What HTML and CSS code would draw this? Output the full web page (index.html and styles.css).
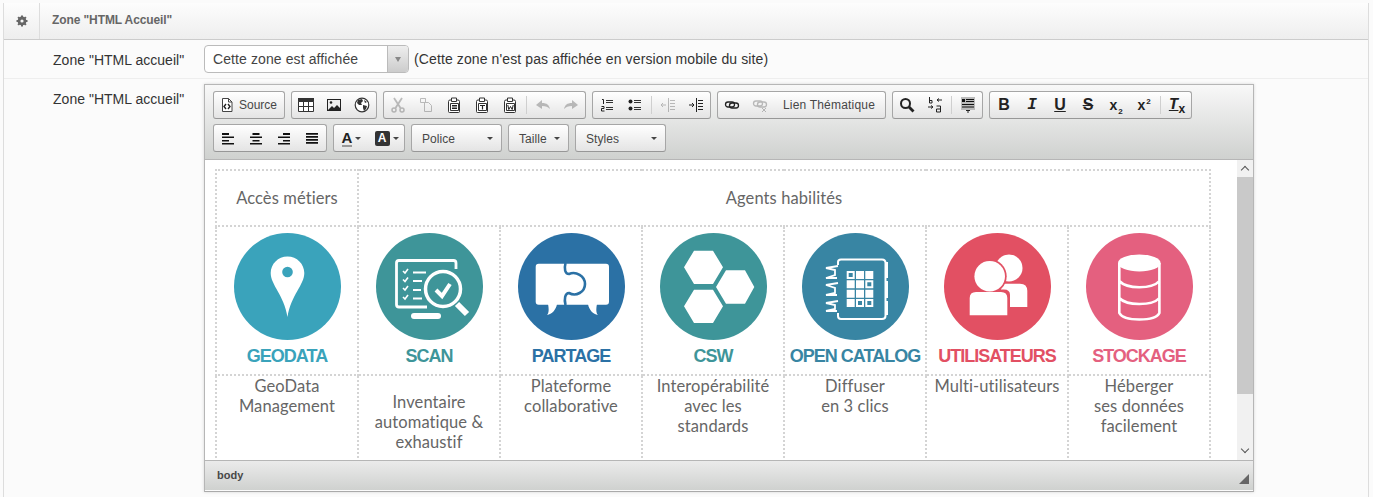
FILE: index.html
```html
<!DOCTYPE html>
<html lang="fr">
<head>
  <meta charset="UTF-8" />
  <title>Zone HTML Accueil</title>
  <link rel="stylesheet" href="styles.css">
</head>
<body>
<div class="panel">
  <div class="panel-head">
    <div class="gear-cell">
      <svg class="gear" viewBox="0 0 12 12"><circle cx="6" cy="6" r="3" fill="none" stroke="#666" stroke-width="2.800"/><path d="M6 .5V3M6 9v2.500M.5 6H3M9 6h2.500M2.100 2.100l1.700 1.700M8.200 8.200l1.700 1.700M2.100 9.900l1.700-1.700M8.200 3.800l1.700-1.700" stroke="#666" stroke-width="2"/></svg>
    </div>
    <div class="panel-title">Zone "HTML Accueil"</div>
  </div>

  <div class="form-row first">
    <label class="form-label">Zone "HTML accueil"</label>
    <div class="select-box">
      <span class="select-value">Cette zone est affichée</span>
      <span class="select-arrow"></span>
    </div>
    <span class="select-note">(Cette zone n'est pas affichée en version mobile du site)</span>
  </div>

  <div class="form-row second">
    <label class="form-label">Zone "HTML accueil"</label>
    <div class="editor">
      <div class="editor-top">
        <div class="tool-row">
          <div class="tool-group">
            <span class="btn btn-text source">
              <svg class="ico" viewBox="0 0 16 16"><path d="M3.500 1.500h6l3.500 3.500v9.500h-9.500z" fill="#fff" stroke="#444"/><path d="M9.500 1.500v3.500h3.500" fill="none" stroke="#444"/><path d="M7 7 5 9.500 7 12M9 7l2 2.500L9 12" fill="none" stroke="#222" stroke-width="1.400"/></svg>
              Source
            </span>
          </div>
          <div class="tool-group">
            <span class="btn"><svg class="ico" viewBox="0 0 16 16"><path d="M0 1h16v4H0z" fill="#333"/><path d="M.5 4.500h15v10H.5zM5.500 4.500v10M10.500 4.500v10M.5 9.500h15" fill="#fff" stroke="#333"/></svg></span>
            <span class="btn"><svg class="ico" viewBox="0 0 16 16"><path d="M1 2h14v12H1z" fill="#222"/><path d="M2 3h12v8l-3-3-3 3-2-2-4 4z" fill="#eee"/><circle cx="5" cy="5.500" r="1.300" fill="#222"/></svg></span>
            <span class="btn"><svg class="ico" viewBox="0 0 16 16"><circle cx="8" cy="8" r="6.800" fill="#fff" stroke="#333" stroke-width="1.200"/><path d="M4 3l4-1 1 2-2 2 1 2-3 0-2-2zM9 8l4 1-1 3-2 2-1-3zM10 3l3 2-2 1z" fill="#333"/></svg></span>
          </div>
          <div class="tool-group">
            <span class="btn off"><svg class="ico" viewBox="0 0 16 16"><path d="M4 1l6.500 10M12 1L5.500 11" stroke="#333" stroke-width="1.800" fill="none"/><circle cx="4" cy="13" r="2" fill="none" stroke="#333" stroke-width="1.500"/><circle cx="12" cy="13" r="2" fill="none" stroke="#333" stroke-width="1.500"/></svg></span>
            <span class="btn off"><svg class="ico" viewBox="0 0 16 16"><path d="M2.500 1.500h5v4h-5zM7.500 1.500v2M6.500 5.500h4l3 3v6h-7z" fill="none" stroke="#333"/></svg></span>
            <span class="btn"><svg class="ico" viewBox="0 0 16 16"><path d="M2.500 14.500v-10q0-1.500 1.500-1.500h8q1.500 0 1.500 1.500v10q0 1-1 1H3.500q-1 0-1-1z" fill="#fff" stroke="#333"/><path d="M5.500 1h5v3.500h-5z" fill="#fff" stroke="#333"/><path d="M4.500 6.500h8v7h-8z" fill="#fff" stroke="#333"/><path d="M6 8.500h5M6 10h5M6 11.500h5" stroke="#222"/></svg></span>
            <span class="btn"><svg class="ico" viewBox="0 0 16 16"><path d="M2.500 14.500v-10q0-1.500 1.500-1.500h8q1.500 0 1.500 1.500v10q0 1-1 1H3.500q-1 0-1-1z" fill="#fff" stroke="#333"/><path d="M5.500 1h5v3.500h-5z" fill="#fff" stroke="#333"/><path d="M4.500 6.500h8v7h-8z" fill="#fff" stroke="#333"/><path d="M6 8.500h5M8.500 8.500v4" stroke="#222" stroke-width="1.200"/></svg></span>
            <span class="btn"><svg class="ico" viewBox="0 0 16 16"><path d="M2.500 14.500v-10q0-1.500 1.500-1.500h8q1.500 0 1.500 1.500v10q0 1-1 1H3.500q-1 0-1-1z" fill="#fff" stroke="#333"/><path d="M5.500 1h5v3.500h-5z" fill="#fff" stroke="#333"/><path d="M4.500 6.500h8v7h-8z" fill="#fff" stroke="#333"/><path d="M5.800 8l1 4.500 1.700-3 1.700 3 1-4.500" fill="none" stroke="#222"/></svg></span>
            <span class="tool-sep"></span>
            <span class="btn off"><svg class="ico" viewBox="0 0 16 16"><path d="M1 8l6-5v3c5 0 7 2 8 6-2-2-4-3-8-3v3z" fill="#333"/></svg></span>
            <span class="btn off"><svg class="ico" viewBox="0 0 16 16"><path d="M15 8L9 3v3C4 6 2 8 1 12c2-2 4-3 8-3v3z" fill="#333"/></svg></span>
          </div>
          <div class="tool-group">
            <span class="btn"><svg class="ico" viewBox="0 0 16 16"><path d="M7 3.500h7M7 5.500h7M7 10.500h7M7 12.500h7" stroke="#333"/><path d="M3 2.500h1.500V7M2.500 9.500h2.500v2h-2.500v2.500H5.500" fill="none" stroke="#222"/></svg></span>
            <span class="btn"><svg class="ico" viewBox="0 0 16 16"><circle cx="3.500" cy="4.500" r="2" fill="#222"/><circle cx="3.500" cy="11.500" r="2" fill="#222"/><path d="M7 3.500h7M7 5.500h7M7 10.500h7M7 12.500h7" stroke="#333"/></svg></span>
            <span class="tool-sep"></span>
            <span class="btn off"><svg class="ico" viewBox="0 0 16 16"><path d="M8.500 1v14M10 3.500h5M10 6.500h5M10 9.500h5M10 12.500h5M1 8h5M3 6L1 8l2 2" fill="none" stroke="#333"/></svg></span>
            <span class="btn"><svg class="ico" viewBox="0 0 16 16"><path d="M8.500 1v14M10 3.500h5M10 6.500h5M10 9.500h5M10 12.500h5M1 8h5M4 6l2 2-2 2" fill="none" stroke="#222"/></svg></span>
          </div>
          <div class="tool-group">
            <span class="btn"><svg class="ico" viewBox="0 0 16 16"><rect x="1.500" y="5" width="9" height="5" rx="2.500" fill="none" stroke="#222" stroke-width="1.300"/><rect x="5.500" y="6" width="9" height="5" rx="2.500" fill="none" stroke="#222" stroke-width="1.300"/></svg></span>
            <span class="btn off"><svg class="ico" viewBox="0 0 16 16"><rect x="1.500" y="4" width="9" height="5" rx="2.500" fill="none" stroke="#333" stroke-width="1.300"/><rect x="5.500" y="5" width="9" height="5" rx="2.500" fill="none" stroke="#333" stroke-width="1.300"/><path d="M10 11l4 4M14 11l-4 4" stroke="#333"/></svg></span>
            <span class="btn btn-text theme">Lien Thématique</span>
          </div>
          <div class="tool-group">
            <span class="btn"><svg class="ico" viewBox="0 0 16 16"><circle cx="6.500" cy="6.500" r="4.500" fill="none" stroke="#222" stroke-width="2"/><path d="M10 10l4.500 4.500" stroke="#222" stroke-width="2.800"/></svg></span>
            <span class="btn"><svg class="ico" viewBox="0 0 16 16"><path d="M2.500 0v6M2.500 3.500h2.500v2.500h-2.500M10 3h5M10 3l2-1.500M10 3l2 1.500M1 10h5M6 10l-2-1.500M6 10l-2 1.500M9.500 9h4v6h-4v-3h4" fill="none" stroke="#222"/></svg></span>
            <span class="tool-sep"></span>
            <span class="btn"><svg class="ico" viewBox="0 0 16 16"><path d="M1 0h14v13H1z" fill="#bbb"/><path d="M2 2h3v3H2zM2 7h12v1H2zM2 9.500h12v1H2zM6 2h8v1H6zM6 4h8v1H6z" fill="#111"/><path d="M6 13.500h4M8 13.500V16" stroke="#222"/></svg></span>
          </div>
          <div class="tool-group">
            <span class="btn"><span class="glyph bold">B</span></span>
            <span class="btn"><span class="glyph slab">I</span></span>
            <span class="btn"><span class="glyph bold under">U</span></span>
            <span class="btn"><span class="glyph bold strike">S</span></span>
            <span class="btn"><span class="glyph mono">x<sub>2</sub></span></span>
            <span class="btn"><span class="glyph mono">x<sup>2</sup></span></span>
            <span class="tool-sep"></span>
            <span class="btn"><span class="glyph slab under">T</span><span class="glyph clear-x">x</span></span>
          </div>
        </div>

        <div class="tool-row">
          <div class="tool-group">
            <span class="btn"><svg class="ico" viewBox="0 0 16 16"><path d="M2 3h7v2H2zM2 6.500h12v1.500H2zM2 10h7v1.500H2zM2 13h12v1.500H2z" fill="#111"/></svg></span>
            <span class="btn"><svg class="ico" viewBox="0 0 16 16"><path d="M4.500 3h7v2h-7zM2 6.500h12v1.500H2zM4.500 10h7v1.500h-7zM2 13h12v1.500H2z" fill="#111"/></svg></span>
            <span class="btn"><svg class="ico" viewBox="0 0 16 16"><path d="M7 3h7v2H7zM2 6.500h12v1.500H2zM7 10h7v1.500H7zM2 13h12v1.500H2z" fill="#111"/></svg></span>
            <span class="btn"><svg class="ico" viewBox="0 0 16 16"><path d="M2 3h12v1.700H2zM2 6h12v1.700H2zM2 9h12v1.700H2zM2 12h12v1.700H2z" fill="#111"/></svg></span>
          </div>
          <div class="tool-group">
            <span class="btn btn-color"><span class="color-a">A</span><span class="mini-arrow"></span></span>
            <span class="btn btn-color"><span class="color-b">A</span><span class="mini-arrow"></span></span>
          </div>
          <div class="tool-group combo wide"><span class="combo-label">Police</span><span class="mini-arrow"></span></div>
          <div class="tool-group combo small"><span class="combo-label">Taille</span><span class="mini-arrow"></span></div>
          <div class="tool-group combo wide"><span class="combo-label">Styles</span><span class="mini-arrow"></span></div>
        </div>
      </div>

      <div class="editor-body">
        <div class="editor-content">
          <table class="zones">
            <colgroup>
              <col><col><col><col><col><col><col>
            </colgroup>
            <tr class="head-row">
              <td>Accès métiers</td>
              <td colspan="6">Agents habilités</td>
            </tr>
            <tr class="logo-row">
              <td>
                <svg class="logo" viewBox="0 0 107 107"><circle cx="53.500" cy="53.500" r="53.500" fill="#3aa3bb"/><path d="M53.500 23.500C44 23.500 36.700 31 36.700 40 36.700 52 50 62 53.500 84 57 62 70.300 52 70.300 40 70.300 31 63 23.500 53.500 23.500Z" fill="#fff"/><circle cx="53.500" cy="39" r="5.300" fill="#3aa3bb"/></svg>
                <div class="logo-name geodata">GEODATA</div>
              </td>
              <td>
                <svg class="logo" viewBox="0 0 107 107"><circle cx="53.500" cy="53.500" r="53.500" fill="#3e9599"/><path d="M80 36V30Q80 27.500 77.500 27.500H23Q20.500 27.500 20.500 30V71.500Q20.500 74 23 74H51" fill="none" stroke="#fff" stroke-width="2.800"/><rect x="35" y="80" width="30" height="6" rx="3" fill="#fff"/><circle cx="67" cy="56" r="17.500" fill="#3e9599" stroke="#fff" stroke-width="3.500"/><path d="M81 71l10 10" stroke="#fff" stroke-width="6"/><path d="M60 57l6 6 8-12" fill="none" stroke="#fff" stroke-width="4"/><path d="M27 38l2 2 3-4M27 46.500l2 2 3-4M27 55l2 2 3-4M27 64l2 2 3-4" fill="none" stroke="#fff" stroke-width="1.600"/><path d="M37 39.500h13M37 48h9M37 57h8M37 65.500h9" stroke="#fff" stroke-width="1.800"/></svg>
                <div class="logo-name scan">SCAN</div>
              </td>
              <td>
                <svg class="logo" viewBox="0 0 107 107"><circle cx="53.500" cy="53.500" r="53.500" fill="#2b71a5"/><rect x="17.700" y="30.700" width="73.300" height="41" rx="3" fill="#fff"/><path d="M30 71C31 76 31 80 29 82 34 81 38 77 39 71ZM79 71C78 76 78 80 80 82 75 81 71 77 70 71Z" fill="#fff"/><path d="M47.500 30C46 36 47 41 51 41 58 38 67 43 67 51 67 59 58 64 51 60 47 60 46 66 47.500 72" fill="none" stroke="#2b71a5" stroke-width="2.600"/></svg>
                <div class="logo-name partage">PARTAGE</div>
              </td>
              <td>
                <svg class="logo" viewBox="0 0 107 107"><circle cx="53.500" cy="53.500" r="53.500" fill="#3e9599"/><path d="M24 34.300 34 17.700H53L63 34.300 53 51H34ZM56 54 66 37.300H85L94.300 54 85 70.700H66ZM24 73.300 34 56.700H53L63 73.300 53 90H34Z" fill="#fff"/></svg>
                <div class="logo-name csw">CSW</div>
              </td>
              <td>
                <svg class="logo" viewBox="0 0 107 107"><circle cx="53.500" cy="53.500" r="53.500" fill="#3885a3"/><path d="M36 32V29Q36 26.500 39 26.500H80Q83.500 26.500 83.500 30V83Q83.500 86 80 86H39Q36 86 36 83V80" fill="none" stroke="#fff" stroke-width="2"/><path d="M36 33 24 35 33 37V42L24 45H35M36 50 24 52 33 55V60L24 62H35M36 68 24 70 33 72V76L24 78H35" fill="none" stroke="#fff" stroke-width="1.800"/><path d="M84 29h2v16h-2zM84 48h2v17h-2zM84 68h2v14h-2z" fill="#fff"/><path d="M44.700 38h8v8h-8zM54 38h8v8h-8zM63.300 38h8v8h-8zM44.700 47.300h8v8h-8zM54 47.300h8v8h-8zM63.300 47.300h8v8h-8zM44.700 56.700h8v8h-8zM54 56.700h8v8h-8zM63.300 56.700h8v8h-8zM44.700 66h8v8h-8zM54 66h8v8h-8zM63.300 66h8v8h-8z" fill="#fff"/><path d="M46.700 40h4v4h-4zM65.300 49.300h4v4h-4zM56 68h4v4h-4zM65.300 68h4v4h-4z" fill="#3885a3"/></svg>
                <div class="logo-name catalog">OPEN CATALOG</div>
              </td>
              <td>
                <svg class="logo" viewBox="0 0 107 107"><circle cx="53.500" cy="53.500" r="53.500" fill="#e25063"/><circle cx="65" cy="35" r="13.500" fill="#fff"/><path d="M57 50.700H76Q83.300 50.700 83.300 58V74H57Z" fill="#fff"/><circle cx="45.700" cy="43.300" r="17" fill="#e25063"/><path d="M23 82V59Q23 56.500 31 56.500H60Q66 56.500 66 62V84H23Z" fill="#e25063"/><circle cx="45.700" cy="43.300" r="15.300" fill="#fff"/><path d="M25.700 82.300V65Q25.700 59 32 59H57Q63.300 59 63.300 65V82.300Z" fill="#fff"/></svg>
                <div class="logo-name users">UTILISATEURS</div>
              </td>
              <td>
                <svg class="logo" viewBox="0 0 107 107"><circle cx="53.500" cy="53.500" r="53.500" fill="#e4607f"/><ellipse cx="53.300" cy="30" rx="21.300" ry="8.500" fill="#fff"/><path d="M33.300 30V80C36 85 45 86.500 53.300 86.500 62 86.500 71 85 73.400 80V30M33.300 48C38 53 47 54.200 53.300 54.200 60 54.200 69 53 73.400 48M33.300 65C38 70 47 71 53.300 71 60 71 69 70 73.400 65" fill="none" stroke="#fff" stroke-width="2.600"/></svg>
                <div class="logo-name stock">STOCKAGE</div>
              </td>
            </tr>
            <tr class="text-row">
              <td>GeoData<br>Management</td>
              <td class="low">Inventaire<br>automatique &amp;<br>exhaustif</td>
              <td>Plateforme<br>collaborative</td>
              <td>Interopérabilité<br>avec les<br>standards</td>
              <td>Diffuser<br>en 3 clics</td>
              <td>Multi-utilisateurs</td>
              <td>Héberger<br>ses données<br>facilement</td>
            </tr>
          </table>
        </div>
        <div class="scrollbar">
          <span class="scroll-up"></span>
          <div class="scroll-thumb"></div>
          <span class="scroll-down"></span>
        </div>
      </div>

      <div class="editor-bottom">
        <span class="path-label">body</span>
        <span class="resizer"></span>
      </div>
    </div>
  </div>
</div>
</body>
</html>
```

FILE: styles.css
```css
html, body {
  margin: 0;
  height: 497px;
  overflow: hidden;
}
body {
  font-family: "Liberation Sans", Arial, sans-serif;
  font-size: 14px;
  color: #333;
  background: #fbfbfb;
}
.panel {
  margin: 3px 4px 0 3px;
  border-left: 1px solid #ddd;
  border-right: 1px solid #ddd;
  height: 494px;
}
.panel-head {
  display: flex;
  height: 36px;
  border-bottom: 1px solid #ccc;
  background: linear-gradient(#fdfdfd, #eeeeee);
}
.gear-cell {
  width: 35px;
  border-right: 1px solid #ddd;
  display: flex;
  align-items: center;
  justify-content: center;
}
.gear {
  width: 12px;
  height: 12px;
}
.panel-title {
  padding-left: 12px;
  line-height: 34px;
  font-size: 12px;
  font-weight: bold;
  letter-spacing: -0.1px;
  color: #666;
}
.form-row {
  display: flex;
  border-bottom: 1px solid #eee;
}
.form-row.first {
  height: 38px;
  align-items: center;
}
.form-row.second {
  border-bottom: 0;
  padding-top: 5px;
}
.form-label {
  width: 151px;
  padding-left: 49px;
  padding-top: 2px;
  letter-spacing: 0.02px;
  color: #333;
}
.form-row.second .form-label {
  padding-top: 7px;
}
.select-box {
  width: 203px;
  height: 26px;
  display: flex;
  border: 1px solid #bbb;
  border-radius: 4px;
  background: #fff;
  margin-top: -1px;
}
.select-value {
  flex: 1;
  padding-left: 8px;
  line-height: 26px;
  letter-spacing: 0.1px;
  color: #444;
}
.select-arrow {
  width: 20px;
  border-left: 1px solid #bbb;
  border-radius: 0 3px 3px 0;
  background: linear-gradient(#eee, #ccc);
  position: relative;
}
.select-arrow::after {
  content: "";
  position: absolute;
  left: 7px;
  top: 11px;
  border: 3px solid transparent;
  border-top: 5px solid #888;
}
.select-note {
  margin-left: 5px;
  margin-top: -1px;
  letter-spacing: 0.11px;
}
.editor {
  width: 1048px;
  height: 406px;
  border: 1px solid #b6b6b6;
  border-bottom-color: #aaa;
  box-shadow: 0 0 3px rgba(0,0,0,0.15);
  display: flex;
  flex-direction: column;
}
.editor-top {
  padding: 6px 0 0 8px;
  box-sizing: border-box;
  border-bottom: 1px solid #b6b6b6;
  height: 75px;
  background: linear-gradient(#f8f8f8, #cfd1cf);
}
.tool-row {
  display: flex;
  gap: 6px;
  height: 28px;
  margin-bottom: 5px;
}
.tool-group {
  display: flex;
  align-items: center;
  height: 26px;
  border: 1px solid #a6a6a6;
  border-bottom-color: #979797;
  border-radius: 3px;
  background: linear-gradient(#ffffff, #e4e4e4);
}
.btn {
  width: 28px;
  height: 26px;
  display: flex;
  align-items: center;
  justify-content: center;
  font-size: 12px;
  color: #474747;
}
.btn.off .ico {
  opacity: 0.3;
}
.btn-text.source {
  width: 70px;
  gap: 4px;
  justify-content: flex-start;
  padding-left: 5px;
  box-sizing: border-box;
}
.btn-text.theme {
  width: 111px;
  padding-right: 1px;
  box-sizing: border-box;
  letter-spacing: 0.2px;
}
.ico {
  width: 16px;
  height: 16px;
  flex: none;
}
.tool-sep {
  width: 1px;
  height: 18px;
  margin: 0 2px;
  background: #cfcfcf;
}
.glyph {
  color: #222;
  font-size: 14px;
  line-height: 16px;
}
.glyph.bold {
  font-weight: bold;
  font-size: 16px;
}
.glyph.slab {
  font-family: "Liberation Mono", monospace;
  font-style: italic;
  font-weight: bold;
  font-size: 16px;
}
.glyph.under {
  text-decoration: underline;
}
.glyph.strike {
  text-decoration: line-through;
}
.glyph.mono {
  font-weight: bold;
  font-size: 14px;
}
.glyph.mono sub, .glyph.mono sup {
  font-size: 8px;
  line-height: 0;
  margin-left: 1px;
}
.clear-x {
  font-size: 12px;
  font-weight: bold;
  margin-top: 7px;
}
.btn-color {
  width: 35px;
  gap: 3px;
}
.color-a {
  font-weight: bold;
  font-size: 15px;
  line-height: 15px;
  color: #222;
  border-bottom: 2px solid #999;
}
.color-b {
  width: 15px;
  height: 15px;
  border-radius: 2px;
  background: #333;
  color: #fff;
  font-weight: bold;
  font-size: 12px;
  line-height: 15px;
  text-align: center;
}
.mini-arrow {
  width: 0;
  height: 0;
  border: 3px solid transparent;
  border-top: 3px solid #444;
  margin-top: 3px;
}
.combo {
  justify-content: space-between;
  padding: 0 8px 0 10px;
  font-size: 12px;
  letter-spacing: 0.05px;
  color: #474747;
}
.combo-label {
  padding-top: 2px;
}
.combo.wide {
  width: 71px;
}
.combo.small {
  width: 41px;
}
.editor-body {
  height: 300px;
  display: flex;
  background: #fff;
}
.editor-content {
  flex: 1;
  overflow: hidden;
  padding: 9px 0 0 10px;
}
.zones {
  border-collapse: collapse;
  table-layout: fixed;
  width: 995px;
  font-family: Lato, sans-serif;
  font-size: 16.500px;
  letter-spacing: 0.1px;
  color: #666;
  text-align: center;
}
.zones col {
  width: 142px;
}
.zones td {
  border: 2px dotted #d4d4d4;
  padding: 0;
}
.head-row td {
  height: 54px;
}
.logo-row td {
  height: 147px;
  vertical-align: top;
}
.logo {
  display: block;
  width: 107px;
  height: 107px;
  margin: 6px auto 0;
}
.logo-name {
  margin-top: 5px;
  font-family: "Liberation Sans", sans-serif;
  font-weight: bold;
  font-size: 18px;
  line-height: 22px;
  letter-spacing: -1px;
  white-space: nowrap;
}
.geodata { color: #3aa3bb; }
.scan { color: #3e9599; }
.partage { color: #2b71a5; }
.csw { color: #3e9599; }
.catalog { color: #3885a3; }
.users { color: #e25063; }
.stock { color: #e4607f; }
.text-row td {
  height: 100px;
  vertical-align: top;
  line-height: 20px;
}
.text-row td.low {
  padding-top: 16px;
}
.scrollbar {
  width: 16px;
  background: #f1f1f1;
  display: flex;
  flex-direction: column;
}
.scroll-up, .scroll-down {
  height: 17px;
  position: relative;
}
.scroll-up::after, .scroll-down::after {
  content: "";
  position: absolute;
  left: 5px;
  width: 5px;
  height: 5px;
  border-left: 1.500px solid #555;
  border-top: 1.500px solid #555;
}
.scroll-up::after {
  top: 7px;
  transform: rotate(45deg);
}
.scroll-down::after {
  top: 3px;
  transform: rotate(225deg);
}
.scroll-thumb {
  height: 217px;
  background: #c9c9c9;
}
.scroll-down {
  margin-top: auto;
}
.editor-bottom {
  height: 30px;
  border-top: 1px solid #b6b6b6;
  box-sizing: border-box;
  display: flex;
  align-items: center;
  justify-content: space-between;
  padding: 0 4px 2px 12px;
  background: linear-gradient(#ebebeb, #cfd1cf);
}
.path-label {
  font-size: 11px;
  font-weight: bold;
  color: #484848;
}
.resizer {
  width: 0;
  height: 0;
  margin-top: 8px;
  border-left: 10px solid transparent;
  border-bottom: 10px solid #666;
}
```
